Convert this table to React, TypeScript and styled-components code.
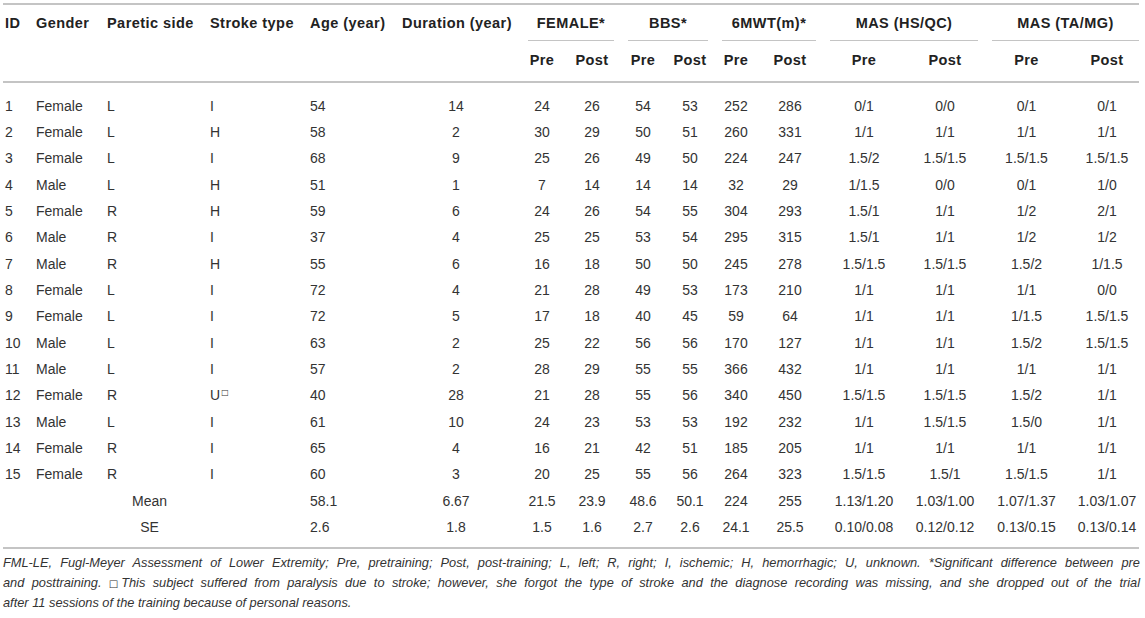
import React from "react";
import styled, { createGlobalStyle } from "styled-components";

const GlobalStyle = createGlobalStyle`
  html, body { margin: 0; padding: 0; background: #ffffff; }
  body {
    font-family: "Liberation Sans", Arial, Helvetica, sans-serif;
    color: #333333;
    -webkit-font-smoothing: antialiased;
  }
`;

const Page = styled.div`
  width: 1145px;
  box-sizing: border-box;
  padding: 3px 6px 0 3px;
`;

const Table = styled.table`
  width: 1136px;
  table-layout: fixed;
  border-collapse: separate;
  border-spacing: 0;
  border-top: 2px solid #c4c4c4;
  border-bottom: 2px solid #c4c4c4;
  font-size: 14px;
`;

const Col = styled.col<{ $w: number }>`
  width: ${(p) => p.$w}px;
`;

const ColHead = styled.th<{ $align?: "left" | "center" }>`
  text-align: ${(p) => p.$align ?? "left"};
  vertical-align: top;
  padding: 10px 0 0 2px;
  line-height: 17px;
  font-weight: 700;
  font-size: 14.5px;
  letter-spacing: 0.45px;
  color: #222222;
  white-space: nowrap;
  border-bottom: 2px solid #c4c4c4;
`;

const GroupHead = styled.th`
  padding: 10px 0 0 14px;
  font-weight: 700;
  font-size: 14.5px;
  letter-spacing: 0.45px;
  color: #222222;
  white-space: nowrap;
`;

const GroupLabel = styled.span`
  display: block;
  text-align: center;
  line-height: 17px;
  padding-bottom: 8px;
  border-bottom: 1px solid #c4c4c4;
`;

const SubHead = styled.th`
  text-align: center;
  padding: 10.5px 0 12.5px;
  line-height: 17px;
  font-weight: 700;
  font-size: 14.5px;
  letter-spacing: 0.45px;
  color: #222222;
  border-bottom: 2px solid #c4c4c4;
`;

const Body = styled.tbody`
  tr:first-child td {
    padding-top: 9.5px;
  }
  tr:last-child td {
    padding-bottom: 7px;
  }
`;

const Cell = styled.td<{ $align?: "left" | "center" }>`
  text-align: ${(p) => p.$align ?? "center"};
  padding: 0 0 0 ${(p) => (p.$align === "left" ? 2 : 0)}px;
  line-height: 26.35px;
  white-space: nowrap;
  color: #333333;
`;

const SummaryLabel = styled.td`
  text-align: center;
  padding: 0 12px 0 0;
  line-height: 26.35px;
  color: #333333;
`;

const Mark = styled.sup`
  font-size: 8px;
  vertical-align: 5px;
  line-height: 0;
  margin-left: 1px;
  font-family: "DejaVu Sans", sans-serif;
`;

const Note = styled.div`
  margin-top: 4px;
  width: 1137px;
  font-style: italic;
  font-size: 12.8px;
  line-height: 19.5px;
  color: #333333;
`;

const NoteLine = styled.div<{ $fill?: boolean }>`
  text-align: ${(p) => (p.$fill ? "justify" : "left")};
  text-align-last: ${(p) => (p.$fill ? "justify" : "left")};
  white-space: nowrap;
`;

const NoteMark = styled.span`
  font-style: normal;
  font-size: 10px;
  font-family: "DejaVu Sans", sans-serif;
  margin-right: -1px;
`;

type Row = {
  id: string;
  gender: string;
  side: string;
  type: string;
  age: string;
  dur: string;
  vals: string[];
};

const rows: Row[] = [
  { id: "1", gender: "Female", side: "L", type: "I", age: "54", dur: "14", vals: ["24", "26", "54", "53", "252", "286", "0/1", "0/0", "0/1", "0/1"] },
  { id: "2", gender: "Female", side: "L", type: "H", age: "58", dur: "2", vals: ["30", "29", "50", "51", "260", "331", "1/1", "1/1", "1/1", "1/1"] },
  { id: "3", gender: "Female", side: "L", type: "I", age: "68", dur: "9", vals: ["25", "26", "49", "50", "224", "247", "1.5/2", "1.5/1.5", "1.5/1.5", "1.5/1.5"] },
  { id: "4", gender: "Male", side: "L", type: "H", age: "51", dur: "1", vals: ["7", "14", "14", "14", "32", "29", "1/1.5", "0/0", "0/1", "1/0"] },
  { id: "5", gender: "Female", side: "R", type: "H", age: "59", dur: "6", vals: ["24", "26", "54", "55", "304", "293", "1.5/1", "1/1", "1/2", "2/1"] },
  { id: "6", gender: "Male", side: "R", type: "I", age: "37", dur: "4", vals: ["25", "25", "53", "54", "295", "315", "1.5/1", "1/1", "1/2", "1/2"] },
  { id: "7", gender: "Male", side: "R", type: "H", age: "55", dur: "6", vals: ["16", "18", "50", "50", "245", "278", "1.5/1.5", "1.5/1.5", "1.5/2", "1/1.5"] },
  { id: "8", gender: "Female", side: "L", type: "I", age: "72", dur: "4", vals: ["21", "28", "49", "53", "173", "210", "1/1", "1/1", "1/1", "0/0"] },
  { id: "9", gender: "Female", side: "L", type: "I", age: "72", dur: "5", vals: ["17", "18", "40", "45", "59", "64", "1/1", "1/1", "1/1.5", "1.5/1.5"] },
  { id: "10", gender: "Male", side: "L", type: "I", age: "63", dur: "2", vals: ["25", "22", "56", "56", "170", "127", "1/1", "1/1", "1.5/2", "1.5/1.5"] },
  { id: "11", gender: "Male", side: "L", type: "I", age: "57", dur: "2", vals: ["28", "29", "55", "55", "366", "432", "1/1", "1/1", "1/1", "1/1"] },
  { id: "12", gender: "Female", side: "R", type: "U", age: "40", dur: "28", vals: ["21", "28", "55", "56", "340", "450", "1.5/1.5", "1.5/1.5", "1.5/2", "1/1"] },
  { id: "13", gender: "Male", side: "L", type: "I", age: "61", dur: "10", vals: ["24", "23", "53", "53", "192", "232", "1/1", "1.5/1.5", "1.5/0", "1/1"] },
  { id: "14", gender: "Female", side: "R", type: "I", age: "65", dur: "4", vals: ["16", "21", "42", "51", "185", "205", "1/1", "1/1", "1/1", "1/1"] },
  { id: "15", gender: "Female", side: "R", type: "I", age: "60", dur: "3", vals: ["20", "25", "55", "56", "264", "323", "1.5/1.5", "1.5/1", "1.5/1.5", "1/1"] },
];

const summary = [
  { label: "Mean", age: "58.1", dur: "6.67", vals: ["21.5", "23.9", "48.6", "50.1", "224", "255", "1.13/1.20", "1.03/1.00", "1.07/1.37", "1.03/1.07"] },
  { label: "SE", age: "2.6", dur: "1.8", vals: ["1.5", "1.6", "2.7", "2.6", "24.1", "25.5", "0.10/0.08", "0.12/0.12", "0.13/0.15", "0.13/0.14"] },
];

const widths = [31, 71, 103, 100, 90, 116, 56, 44, 58, 36, 56, 52, 96, 66, 97, 64];
const groups = ["FEMALE*", "BBS*", "6MWT(m)*", "MAS (HS/QC)", "MAS (TA/MG)"];

export default function App() {
  return (
    <>
      <GlobalStyle />
      <Page>
        <Table>
          <colgroup>
            {widths.map((w, i) => (
              <Col key={i} $w={w} />
            ))}
          </colgroup>
          <thead>
            <tr>
              <ColHead rowSpan={2}>ID</ColHead>
              <ColHead rowSpan={2}>Gender</ColHead>
              <ColHead rowSpan={2}>Paretic side</ColHead>
              <ColHead rowSpan={2}>Stroke type</ColHead>
              <ColHead rowSpan={2}>Age (year)</ColHead>
              <ColHead rowSpan={2} $align="center">
                Duration (year)
              </ColHead>
              {groups.map((g) => (
                <GroupHead key={g} colSpan={2}>
                  <GroupLabel>{g}</GroupLabel>
                </GroupHead>
              ))}
            </tr>
            <tr>
              {groups.map((g) => (
                <React.Fragment key={g}>
                  <SubHead>Pre</SubHead>
                  <SubHead>Post</SubHead>
                </React.Fragment>
              ))}
            </tr>
          </thead>
          <Body>
            {rows.map((r) => (
              <tr key={r.id}>
                <Cell $align="left">{r.id}</Cell>
                <Cell $align="left">{r.gender}</Cell>
                <Cell $align="left">{r.side}</Cell>
                <Cell $align="left">
                  {r.type}
                  {r.type === "U" && <Mark>□</Mark>}
                </Cell>
                <Cell $align="left">{r.age}</Cell>
                <Cell>{r.dur}</Cell>
                {r.vals.map((v, i) => (
                  <Cell key={i}>{v}</Cell>
                ))}
              </tr>
            ))}
            {summary.map((s) => (
              <tr key={s.label}>
                <SummaryLabel colSpan={4}>{s.label}</SummaryLabel>
                <Cell $align="left">{s.age}</Cell>
                <Cell>{s.dur}</Cell>
                {s.vals.map((v, i) => (
                  <Cell key={i}>{v}</Cell>
                ))}
              </tr>
            ))}
          </Body>
        </Table>
        <Note>
          <NoteLine $fill>
            FML-LE, Fugl-Meyer Assessment of Lower Extremity; Pre, pretraining; Post, post-training; L, left; R, right; I,
            ischemic; H, hemorrhagic; U, unknown. *Significant difference between pre
          </NoteLine>
          <NoteLine $fill>
            and posttraining. <NoteMark>□</NoteMark>This subject suffered from paralysis due to stroke; however, she forgot
            the type of stroke and the diagnose recording was missing, and she dropped out of the trial
          </NoteLine>
          <NoteLine>after 11 sessions of the training because of personal reasons.</NoteLine>
        </Note>
      </Page>
    </>
  );
}
